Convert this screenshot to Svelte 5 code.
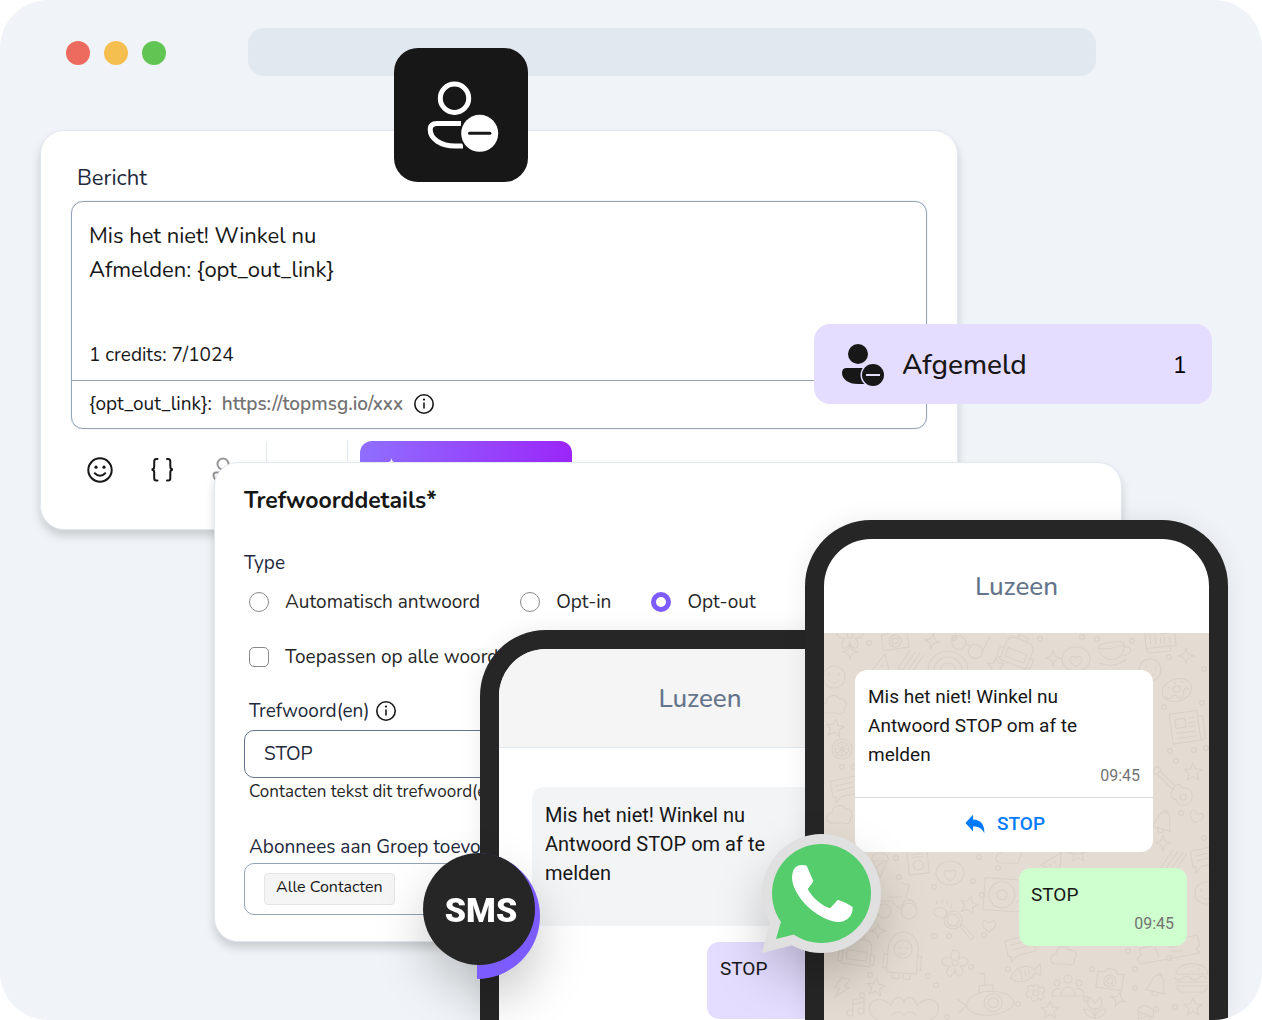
<script>
    let message = $state('Mis het niet! Winkel nu\nAfmelden: {opt_out_link}');
    let type = $state('opt-out');
    let applyAll = $state(false);
    let keyword = $state('STOP');

    const types = [
        { value: 'auto', label: 'Automatisch antwoord' },
        { value: 'opt-in', label: 'Opt-in' },
        { value: 'opt-out', label: 'Opt-out' }
    ];

    // line drawings for the chat wallpaper, each centred on 0,0
    const shapes = {
        star: 'M0-9 2.6-3 9-2.6 4 1.6 5.8 8 0 4.4-5.8 8-4 1.6-9-2.6-2.6-3Z',
        sparkle: 'M0-8C1-2 2-1 8 0 2 1 1 2 0 8-1 2-2 1-8 0-2-1-1-2 0-8Z',
        heart: 'M0 6C-12-2-5-9 0-3 5-9 12-2 0 6Z',
        cloud: 'M-9 8C-16 6-13-2-8-2-8-10 2-12 5-6 13-7 14 2 10 3 12 8 7 10 3 8Z',
        bell: 'M-10 7C-5 2-8-10 0-10S5 2 10 7ZM-3 8a3 3 0 0 0 6 0M-2-10a2 2 0 1 1 4 0',
        camera: 'M-13-7h6l3-4h8l3 4h6v16h-26ZM6 1a6 6 0 1 1-12 0 6 6 0 0 1 12 0M3 1a3 3 0 1 1-6 0 3 3 0 0 1 6 0',
        flower: 'M-3-4C-9-16 9-16 3-4 14-10 18 4 5 3 14 12 1 19 0 6-2 19-14 12-5 3-18 4-14-10-3-4ZM3 0a3 3 0 1 1-6 0 3 3 0 0 1 6 0',
        paper: 'M-16-15h28v30h-28ZM12-9h5v21q-2 3-5 3M-11-9h10v9h-10ZM3-9h5M3-4h5M3 0h5M-11 5H8M-11 10H8',
        donut: 'M15 0a15 11 0 1 1-30 0 15 11 0 0 1 30 0M4-1a4 3 0 1 1-8 0 4 3 0 0 1 8 0M-13 3q3 5 6 2t6 2 6-2 7-2M-8-5l2 1M6-7 8-5M9 1 11 0M0-8v2',
        cup: 'M-14-7C-14-11 12-11 12-7S-14-3-14-7C-14 12 12 12 12-7M12-3c8-2 8 8-2 8M-15 9q14 8 27 0',
        fries: 'M-12 10-4-10M-8 12 1-9M-3 12 6-9M2 12 10-8M-12 10 2 12',
        rainbow: 'M-20 10a20 20 0 0 1 40 0M-14 10a14 14 0 0 1 28 0M-8 10a8 8 0 0 1 16 0',
        glasses: 'M-4 2a7 7 0 1 1-14 0 7 7 0 0 1 14 0M14 7a7 7 0 1 1-14 0 7 7 0 0 1 14 0M-4 3q3-3 5 1M-18 0-14-12M14 5 18-10',
        bag: 'M-14 12v-18q0-8 9-8h10q9 0 9 8v18ZM-5-14v-4h10v4M-10-2h20v9h-20ZM-14 0h-4v10h4M14 0h4v10h-4',
        smile: 'M11 0a11 11 0 1 1-22 0 11 11 0 0 1 22 0M-5-4v2M5-4v2M-5 3q5 6 10 0',
        wheel: 'M10 0a10 10 0 1 1-20 0 10 10 0 0 1 20 0M7 0a7 7 0 1 1-14 0 7 7 0 0 1 14 0M-7 0h14M0-7v14M-5-5 5 5M5-5-5 5',
        guitar: 'M0-4C-4-8-10-6-9-1-18 0-17 14-8 15 0 16 3 10 2 5 7 4 6-1 3-3ZM1-5 16-20M4-2 19-17M15-21l4-4 5 5-4 4ZM-4 6a3 3 0 1 1-6 0 3 3 0 0 1 6 0',
        disc: 'M-21-16h42v32h-42ZM10 0a13 13 0 1 1-26 0 13 13 0 0 1 26 0M2 0a5 5 0 1 1-10 0 5 5 0 0 1 10 0M16-10v12l-4 5M16 10h1',
        radio: 'M-10-12h20v24h-20ZM5 3a5 5 0 1 1-10 0 5 5 0 0 1 10 0M-5-8h10M-5-5h10',
        heartring: 'M14 0a14 12 0 1 1-28 0 14 12 0 0 1 28 0M0 8C-10 1-5-6 0-1 5-6 10 1 0 8Z',
        scooter: 'M-9 8a7 7 0 1 1-14 0 7 7 0 0 1 14 0M17 8a8 8 0 1 1-16 0 8 8 0 0 1 16 0M-20-2h12L-2 5h4M2 5C2-8 18-4 16 6M6-5 9-18 2-20M-12-6h14',
        paw: 'M-7 5C-7-3 7-3 7 5 5 10-5 10-7 5ZM-7-3v-3M-2-6v-3M3-6v-3M8-3v-3',
        lens: 'M4-4a9 9 0 1 1-18 0 9 9 0 0 1 18 0M1-4a6 6 0 1 1-12 0 6 6 0 0 1 12 0M2 2 4 0 16 13 13 16Z',
        robot: 'M-15 22V-2a15 17 0 0 1 30 0v24ZM9-2a9 9 0 1 1-18 0 9 9 0 0 1 18 0M-4-3h2M3-3h2M-3 2q3 3 6 0M-15 4h-4v14h4M15 4h4v14h-4M-9 22v6h7v-6M2 22v6h7v-6',
        chat: 'M-14-8 12-11 15 6-4 8-11 14-10 8-13 8ZM-9-3 8-5M-8 2 9 0',
        fish: 'M-15 2C-9-8 5-9 10-1L17-6 15 6 10 2C3 10-9 10-15 2ZM-10 0h1M-5-4q3 5 0 10M0-2v5M4-2v4',
        sub: 'M24 3C22-12-20-16-24 3-20 19 20 17 24 3ZM12 2a9 9 0 1 1-18 0 9 9 0 0 1 18 0M8 2a5 5 0 1 1-10 0 5 5 0 0 1 10 0M-10-9v-7h14v7M-4-16v-12h-4M-24 3l-8-7M-24 3l-8 7',
        people: 'M4-6a4 4 0 1 1-8 0 4 4 0 0 1 8 0M-8-2a3 3 0 1 1-6 0 3 3 0 0 1 6 0M14-2a3 3 0 1 1-6 0 3 3 0 0 1 6 0M-7 11C-7-1 7-1 7 11ZM-8 11h-8C-16 4-11 3-8 4M8 11h8C16 4 11 3 8 4',
        gear: 'M-2-8h4l1 3 4-1 2 4-3 2 2 4-3 3-3-2-2 3h-4l-1-4-4 0-1-4 3-2-2-4 4-2 2 2ZM3 0a3 3 0 1 1-6 0 3 3 0 0 1 6 0',
        burger: 'M-16-3C-15-17 15-17 16-3ZM-17 1q4 4 8 0t8 0 8 0 8 0M-16 5h32M-15 9h30q0 6-5 6h-20q-5 0-5-6M-7-9h1M0-11h1M6-8h1M-1-6h1',
        bolt: 'M-3-10H6L2-2H7L-5 11-2 1H-7Z',
        note: 'M-4 6a3 3 0 1 1-6 0 3 3 0 0 1 6 0M7 4a3 3 0 1 1-6 0 3 3 0 0 1 6 0M-4 6V-7L7-9V4M-4-3 7-5',
        tulip: 'M0 12V2M0 2C-9 2-8-6-5-10L0-4 5-10C8-6 9 2 0 2ZM0 11C-8 11-11 5-11 2-5 2-1 6 0 11 1 6 5 2 11 2 11 5 8 11 0 11Z',
        pizza: 'M-10 8 5-11 10 9ZM1 1h2M-2 5h2M5 5h1',
        cone: 'M-8-3C-10-14 10-14 8-3ZM-7-3 0 14 7-3M-4 3 5-3',
        hands: 'M0 18C-18 14-38 8-34-6-28-16-16-10-13-5-10-18 0-14 0-8 0-14 10-18 13-5 16-10 28-16 34-6 38 8 18 14 0 18ZM-12 4q6-6 12 0 6-6 12 0',
        ticket: 'M-30 2 28-12 31-2 27 2 31 6-28 17-32 12-28 8ZM-14 1l4 8M0 0h8M2 4h12'
    };

    // [shape, x, y, turn]
    const doodles = [
        ['flower', 26, 2, 0], ['camera', 71, 7, -8], ['sparkle', 108, 8, 10], ['glasses', 146, 10, 12], ['bag', 193, 20, 22],
        ['sparkle', 229, 25, 0], ['heartring', 252, 26, 0], ['cup', 289, 19, -8], ['paper', 336, 2, 84], ['sparkle', 362, 23, 0],
        ['smile', 326, 37, 14], ['donut', 353, 57, -18], ['paper', 363, 94, -8], ['pizza', 56, 32, 0], ['fries', 88, 28, 12],
        ['rainbow', 124, 28, 0], ['sparkle', 26, 19, 0], ['smile', 10, 44, 0], ['cloud', 10, 72, 0], ['star', 11, 95, 8],
        ['wheel', 18, 116, 0], ['star', 369, 139, 0], ['chat', 21, 155, -6], ['cloud', 16, 182, 0], ['guitar', 353, 157, -90],
        ['bell', 339, 189, 16], ['sparkle', 339, 210, 0], ['fries', 351, 227, 12], ['chat', 381, 225, -6], ['smile', 382, 260, 0],
        ['star', 172, 33, 0], ['heart', 372, 184, 20], ['cone', 56, 231, 0], ['radio', 94, 229, -6], ['heartring', 126, 240, 0],
        ['pizza', 229, 228, 20], ['star', 254, 220, 0], ['disc', 181, 262, 4], ['scooter', 76, 270, 0], ['star', 145, 272, 14],
        ['paw', 118, 276, 18], ['lens', 134, 291, 0], ['heart', 165, 293, 0], ['bag', 33, 320, 8], ['robot', 79, 318, 4],
        ['flower', 131, 330, 0], ['chat', 196, 314, -8], ['cloud', 240, 323, 0], ['fish', 201, 340, -12], ['sub', 166, 368, -4],
        ['people', 244, 352, 0], ['gear', 212, 360, 0], ['camera', 286, 347, 8], ['bell', 333, 352, 14], ['burger', 368, 344, 0],
        ['ticket', 345, 314, 0], ['bolt', 18, 355, 14], ['star', 52, 354, 8], ['note', 33, 374, 0], ['hands', 80, 378, 0],
        ['sparkle', 294, 366, 20], ['tulip', 271, 374, 0], ['star', 226, 377, 0], ['star', 369, 374, 0], ['sparkle', 54, 298, 0],
        ['cup', 252, 208, 10], ['cone', 320, 384, 20], ['cloud', 185, 222, 0]
    ];

    const dots = [
        [45, 10], [130, 5], [216, 6], [258, 4], [273, 6], [308, 8], [40, 40], [345, 24], [380, 36], [378, 70],
        [340, 74], [370, 117], [346, 118], [352, 128], [382, 115], [30, 134], [18, 134], [357, 180], [380, 205],
        [72, 225], [155, 224], [174, 235], [149, 248], [110, 254], [75, 244], [158, 262], [110, 303], [160, 302],
        [125, 303], [46, 342], [112, 352], [147, 334], [184, 336], [194, 371], [123, 384], [268, 336], [311, 336],
        [345, 325], [311, 355], [351, 374], [332, 376], [262, 366], [198, 290], [38, 362], [104, 343], [304, 318]
    ];
</script>

{#snippet infoIcon()}
    <svg class="info" viewBox="0 0 22 22" aria-hidden="true">
        <circle cx="11" cy="11" r="9.2" />
        <path d="M11 9.6v6" />
        <circle class="point" cx="11" cy="6.6" r="1.1" />
    </svg>
{/snippet}

{#snippet wallpaper()}
    <svg class="wallpaper" aria-hidden="true">
        {#each doodles as [name, x, y, turn]}
            <path d={shapes[name]} transform="translate({x} {y}) rotate({turn})" />
        {/each}
        {#each dots as [x, y]}
            <circle cx={x} cy={y} r="2.4" />
        {/each}
    </svg>
{/snippet}

<main class="scene">
    <header class="browser">
        <div class="lights">
            <span class="light red"></span>
            <span class="light yellow"></span>
            <span class="light green"></span>
        </div>
        <div class="address"></div>
    </header>

    <section class="card composer">
        <label class="composer-label" for="message">Bericht</label>
        <div class="editor">
            <textarea id="message" rows="3" spellcheck="false" bind:value={message}></textarea>
            <p class="credits">1 credits: 7/1024</p>
            <div class="link-row">
                <span>{'{opt_out_link}'}:</span>
                <a href="#link">https://topmsg.io/xxx</a>
                {@render infoIcon()}
            </div>
        </div>
        <div class="toolbar">
            <button class="tool" aria-label="Emoji">
                <svg viewBox="0 0 26 26">
                    <circle cx="13" cy="13" r="11.7" />
                    <path d="M7.8 16.2q5.2 5 10.4 0" />
                    <circle class="point" cx="9" cy="10.2" r="1.6" />
                    <circle class="point" cx="17" cy="10.2" r="1.6" />
                </svg>
            </button>
            <button class="tool" aria-label="Variabele">
                <svg viewBox="0 0 26 26">
                    <path d="M7.5 2H6.2Q4.2 2 4.2 4.5V9.5Q4.2 12.5 1.5 12.5 4.2 12.5 4.2 15.5V21Q4.2 23.5 6.2 23.5H7.5" />
                    <path d="M17 2H18.3Q20.3 2 20.3 4.5V9.5Q20.3 12.5 23 12.5 20.3 12.5 20.3 15.5V21Q20.3 23.5 18.3 23.5H17" />
                </svg>
            </button>
            <button class="tool faded" aria-label="Afmeldlink">
                <svg viewBox="0 0 26 26">
                    <circle cx="10" cy="7" r="5.5" />
                    <path d="M14 15.5H3Q.5 15.5 .5 18.5 1.5 24.5 10 24.5" />
                </svg>
            </button>
            <span class="divider first"></span>
            <span class="divider"></span>
            <button class="ai" aria-label="AI">
                <svg viewBox="0 0 30 24">
                    <path d="M11.5 1C12 4 12.5 4.500 15.500 5.500 12.500 6.500 12 7 11.500 10 11 7 10.500 6.500 7.500 5.500 10.500 4.500 11 4 11.500 1ZM27 4.500l1 3 3 1-3 1-1 3-1-3-3-1 3-1Z" />
                </svg>
            </button>
        </div>
    </section>

    <div class="tile">
        <svg viewBox="0 0 76 76" aria-hidden="true">
            <circle cx="31.5" cy="21.3" r="14.2" />
            <path d="M38 46.5H14Q7.2 46.5 7.2 52.5C7.2 62 18 69 32 69H40" />
            <circle class="cut" cx="56.7" cy="56.3" r="20.5" />
            <circle class="fill" cx="56.7" cy="56.3" r="18.5" />
            <path class="minus" d="M46.5 56.3h20.4" />
        </svg>
    </div>

    <aside class="status">
        <svg viewBox="0 0 44 44" aria-hidden="true">
            <circle cx="17" cy="11" r="10" />
            <path d="M5.5 25H28V41H17C7 41 1 36 1 30Q1 25 5.5 25Z" />
            <circle class="cut" cx="32" cy="32" r="12.5" />
            <circle cx="32" cy="32" r="11" />
            <path class="minus" d="M25 32h14" />
        </svg>
        <span class="status-name">Afgemeld</span>
        <span class="status-count">1</span>
    </aside>

    <section class="card details">
        <h2>Trefwoorddetails*</h2>
        <fieldset>
            <legend>Type</legend>
            <div class="radios">
                {#each types as item}
                    <label class="choice">
                        <input type="radio" name="type" value={item.value} bind:group={type} />
                        {item.label}
                    </label>
                {/each}
            </div>
        </fieldset>
        <label class="choice apply">
            <input type="checkbox" bind:checked={applyAll} />
            Toepassen op alle woorden
        </label>
        <div class="field-label">
            <label for="keyword">Trefwoord(en)</label>
            {@render infoIcon()}
        </div>
        <input id="keyword" class="keyword" type="text" bind:value={keyword} />
        <p class="hint">Contacten tekst dit trefwoord(en)</p>
        <label class="group-label" for="group">Abonnees aan Groep toevoegen</label>
        <div class="group">
            <button class="chip">Alle Contacten</button>
            <input id="group" type="text" />
        </div>
    </section>

    <section class="phone sms-phone">
        <header>Luzeen</header>
        <div class="chat">
            <p class="bubble received">Mis het niet! Winkel nu<br />Antwoord STOP om af te<br />melden</p>
            <p class="bubble sent">STOP</p>
        </div>
    </section>

    <section class="phone wa-phone">
        <header>Luzeen</header>
        <div class="chat">
            {@render wallpaper()}
            <div class="bubble received">
                <p>Mis het niet! Winkel nu<br />Antwoord STOP om af te<br />melden</p>
                <time>09:45</time>
                <button class="reply">
                    <svg viewBox="0 0 20 20" aria-hidden="true">
                        <path d="M8 .8V5.5C15.5 5.6 19.8 10.5 19.3 19.2 17 14.5 13.5 12.6 8 12.6V17.2L.4 9Z" />
                    </svg>
                    STOP
                </button>
            </div>
            <div class="bubble sent">
                <p>STOP</p>
                <time>09:45</time>
            </div>
        </div>
    </section>

    <div class="sms-badge"><span>SMS</span></div>

    <svg class="wa-badge" viewBox="0 0 120 120" role="img" aria-label="WhatsApp">
        <g class="rim">
            <circle cx="59.5" cy="60.5" r="59.5" />
            <path d="M8 88 0 120 31 112 40 80Z" />
        </g>
        <g class="leaf">
            <circle cx="59.5" cy="60.5" r="49.5" />
            <path d="M19 88.5 14 106 32 101.5 45 80Z" />
        </g>
        <path class="handset" d="M36.3 32.5Q41 31.5 44.7 32.8L51.3 48Q50 51 45.7 56C50 64 59 72.5 68 75.3Q72.5 71 75.7 66.8Q83 69 90.7 74Q91 84 82 88Q77 90 70 88C50 82 31 62 30 45Q30 35 36.3 32.5Z" />
    </svg>
</main>

<style>
    :global(body) {
        margin: 0;
        background: #fff;
    }

    .scene {
        position: relative;
        min-height: 100vh;
        overflow: hidden;
        border-radius: 48px;
        background: #f0f4f8;
        color: #171717;
        font-family: Nunito, Lato, sans-serif;
        font-size: 19px;
        line-height: 24px;
    }

    .scene * {
        box-sizing: border-box;
    }

    p,
    h2,
    fieldset {
        margin: 0;
        padding: 0;
        border: 0;
    }

    button,
    input,
    textarea {
        margin: 0;
        padding: 0;
        border: 0;
        background: none;
        color: inherit;
        font: inherit;
        outline: none;
    }

    /* browser bar */
    .browser {
        display: flex;
        align-items: center;
        padding: 28px 166px 0 66px;
    }

    .lights {
        display: flex;
        gap: 14px;
        width: 182px;
        padding-top: 2px;
    }

    .light {
        width: 24px;
        height: 24px;
        border-radius: 50%;
    }

    .red {
        background: #ed6a5e;
    }

    .yellow {
        background: #f4bf4f;
    }

    .green {
        background: #61c554;
    }

    .address {
        flex: 1;
        height: 48px;
        border-radius: 16px;
        background: #e2e8f0;
    }

    /* windows lying on the canvas */
    .card {
        position: absolute;
        border: 1px solid #e2e8f0;
        border-radius: 24px;
        background: #fff;
        box-shadow: 0 6px 10px rgba(0, 0, 0, 0.16);
    }

    .composer {
        top: 130px;
        left: 40px;
        right: 304px;
        height: 400px;
        padding: 35px 30px 0;
    }

    .composer-label {
        display: block;
        padding-left: 6px;
        color: #1e293b;
        font-size: 22px;
    }

    .editor {
        margin-top: 11px;
        border: 1px solid #94a3b8;
        border-radius: 12px;
        box-shadow: 0 0 1px #94a3b8;
    }

    textarea {
        display: block;
        width: 100%;
        height: 120px;
        padding: 17px 17px 0;
        font-size: 22px;
        line-height: 34px;
        resize: none;
    }

    .credits {
        padding: 21px 17px 13px;
    }

    .link-row {
        display: flex;
        align-items: center;
        gap: 10px;
        padding: 11px 17px 12px;
        border-top: 1px solid #94a3b8;
    }

    .link-row a {
        color: #737373;
        font-weight: 600;
        text-decoration: none;
    }

    .info {
        width: 22px;
        height: 22px;
        fill: none;
        stroke: #171717;
        stroke-width: 1.6;
    }

    .point {
        fill: #171717;
        stroke: none;
    }

    .toolbar {
        display: flex;
        align-items: flex-start;
        margin-top: 12px;
        padding-left: 16px;
    }

    .tool {
        display: flex;
        width: 26px;
        margin: 16px 37px 0 0;
    }

    .tool svg {
        width: 26px;
        height: 26px;
        fill: none;
        stroke: #171717;
        stroke-width: 2;
        stroke-linecap: round;
        overflow: visible;
    }

    .tool .point {
        fill: #171717;
        stroke: none;
    }

    .faded {
        opacity: 0.45;
    }

    .divider {
        width: 1px;
        height: 56px;
        margin-right: 12px;
        background: #e2e8f0;
    }

    .first {
        margin: 0 80px 0 -10px;
    }

    .ai {
        width: 212px;
        height: 56px;
        border-radius: 12px;
        background: linear-gradient(90deg, #8f6fff, #9b26f9);
    }

    .ai svg {
        display: block;
        width: 30px;
        height: 24px;
        margin-left: 20px;
        overflow: visible;
        fill: #fff;
    }

    .tile {
        position: absolute;
        top: 48px;
        left: 394px;
        display: grid;
        place-items: center;
        width: 134px;
        height: 134px;
        border-radius: 24px;
        background: #171717;
    }

    .tile svg {
        width: 76px;
        height: 76px;
        fill: none;
        stroke: #fff;
        stroke-width: 5;
    }

    .tile .cut {
        fill: #171717;
        stroke: none;
    }

    .tile .fill {
        fill: #fff;
        stroke: none;
    }

    .tile .minus {
        stroke: #171717;
        stroke-width: 3;
        stroke-linecap: round;
    }

    .status {
        position: absolute;
        top: 324px;
        right: 50px;
        display: flex;
        align-items: center;
        gap: 17px;
        width: 398px;
        height: 80px;
        padding: 2px 25px 0 27px;
        border-radius: 16px;
        background: #e5ddff;
    }

    .status svg {
        width: 44px;
        height: 44px;
        fill: #171717;
    }

    .status .cut {
        fill: #e5ddff;
    }

    .status .minus {
        stroke: #e5ddff;
        stroke-width: 2;
    }

    .status-name {
        flex: 1;
        font-size: 28px;
        font-weight: 500;
    }

    .status-count {
        color: #000;
        font-size: 24px;
    }

    .details {
        top: 462px;
        left: 214px;
        right: 140px;
        height: 480px;
        padding: 26px 29px 0;
    }

    h2 {
        font-size: 23px;
        font-weight: 700;
    }

    legend {
        padding: 0;
        color: #1e293b;
    }

    fieldset {
        margin-top: 38px;
    }

    .radios {
        display: flex;
        gap: 35px;
        padding-top: 15px;
    }

    .choice {
        display: flex;
        align-items: center;
        gap: 16px;
        padding-left: 5px;
        color: #262626;
        white-space: nowrap;
    }

    .choice input {
        width: 20px;
        height: 20px;
        border: 1px solid #8a8a8a;
        border-radius: 50%;
        background: #fff;
        appearance: none;
    }

    .choice input[type='radio']:checked {
        border: 5px solid #7c5cff;
    }

    .choice input[type='checkbox'] {
        border-radius: 5px;
    }

    .apply {
        margin-top: 31px;
    }

    .field-label {
        display: flex;
        align-items: center;
        gap: 6px;
        margin-top: 30px;
        padding-left: 5px;
        color: #1e293b;
    }

    .keyword {
        display: block;
        width: 100%;
        height: 48px;
        margin-top: 7px;
        padding: 0 19px;
        border: 1px solid #64748b;
        border-radius: 10px;
        color: #1e293b;
    }

    .hint {
        padding: 2px 5px 0;
        color: #262626;
        font-size: 17px;
    }

    .group-label {
        display: block;
        margin-top: 31px;
        padding-left: 5px;
        color: #1e293b;
    }

    .group {
        display: flex;
        align-items: center;
        gap: 8px;
        height: 52px;
        margin-top: 4px;
        padding: 0 19px;
        border: 1px solid #94a3b8;
        border-radius: 10px;
    }

    .group input {
        flex: 1;
    }

    .chip {
        height: 32px;
        padding: 0 11px 4px;
        border: 1px solid #e5e5e5;
        border-radius: 4px;
        background: #f5f5f5;
        font-size: 16px;
    }

    /* phones */
    .phone {
        position: absolute;
        bottom: 0;
        display: flex;
        flex-direction: column;
        overflow: hidden;
        border: 19px solid #262626;
        border-bottom: 0;
        border-radius: 66px 66px 0 0;
        background: #fff;
        box-shadow: 0 0 24px rgba(0, 0, 0, 0.08);
        font-family: Roboto, sans-serif;
        font-size: 19px;
        line-height: 29px;
    }

    .phone header {
        display: flex;
        align-items: center;
        justify-content: center;
        color: #64748b;
        font-family: Nunito, Lato, sans-serif;
        font-size: 26px;
        font-weight: 500;
    }

    .chat {
        position: relative;
        flex: 1;
        display: flex;
        flex-direction: column;
        align-items: flex-start;
    }

    .bubble {
        position: relative;
        border-radius: 12px;
    }

    .sms-phone {
        top: 630px;
        left: 480px;
        width: 440px;
    }

    .sms-phone header {
        height: 99px;
        border-bottom: 1px solid #e2e8f0;
        background: #f5f5f5;
    }

    .sms-phone .chat {
        gap: 16px;
        padding: 39px 33px 0;
    }

    .sms-phone .received {
        height: 139px;
        width: 300px;
        padding: 14px 13px;
        background: #f3f4f6;
        font-size: 20px;
    }

    .sms-phone .sent {
        align-self: flex-end;
        width: 161px;
        height: 77px;
        padding: 12px 13px;
        background: #e5ddff;
    }

    .wa-phone {
        top: 520px;
        left: 805px;
        width: 423px;
    }

    .wa-phone header {
        height: 94px;
    }

    .wa-phone .chat {
        gap: 16px;
        padding: 37px 22px 0 31px;
        background: #e4dcd2;
    }

    .wallpaper {
        position: absolute;
        inset: 0;
        width: 100%;
        height: 100%;
        fill: none;
        stroke: #d9d1c7;
        stroke-width: 1.1;
        stroke-linejoin: round;
        stroke-linecap: round;
    }

    .wa-phone .received {
        display: flex;
        flex-direction: column;
        width: 298px;
        background: #fff;
    }

    .wa-phone .received p {
        padding: 12px 13px 0;
    }

    time {
        align-self: flex-end;
        padding: 0 13px;
        color: #737373;
        font-size: 16px;
        line-height: 14px;
    }

    .wa-phone .received time {
        padding-bottom: 14px;
    }

    .reply {
        display: flex;
        align-items: center;
        justify-content: center;
        gap: 12px;
        height: 55px;
        padding: 0 0 3px 2px;
        border-top: 1px solid #dcdcdc;
        color: #007bff;
        font-weight: 500;
    }

    .reply svg {
        width: 20px;
        height: 20px;
        fill: #007bff;
    }

    .wa-phone .sent {
        display: flex;
        flex-direction: column;
        align-self: flex-end;
        width: 168px;
        height: 78px;
        padding-top: 12px;
        background: #cfffce;
    }

    .wa-phone .sent p {
        padding: 0 12px 8px;
    }

    /* channel badges */
    .sms-badge {
        position: absolute;
        top: 853px;
        left: 423px;
        display: grid;
        place-items: center;
        width: 112px;
        height: 112px;
        color: #fff;
        font-family: Roboto, sans-serif;
        font-size: 34px;
        font-weight: 900;
        filter: drop-shadow(0 24px 24px rgba(0, 0, 0, 0.2));
    }

    .sms-badge::before {
        content: '';
        position: absolute;
        top: 0;
        left: 54px;
        width: 63px;
        height: 126px;
        border-radius: 0 63px 63px 0;
        background: #7c5cff;
    }

    .sms-badge::after {
        content: '';
        position: absolute;
        inset: 0;
        border-radius: 50%;
        background: #262626;
    }

    .sms-badge span {
        position: relative;
        z-index: 1;
        padding: 2px 0 0 4px;
    }

    .wa-badge {
        position: absolute;
        top: 833px;
        left: 762px;
        width: 120px;
        height: 120px;
        overflow: visible;
        filter: drop-shadow(0 24px 24px rgba(0, 0, 0, 0.2));
    }

    .rim {
        fill: #e0e0e0;
    }

    .leaf {
        fill: #55cd6c;
    }

    .handset {
        fill: #fff;
    }
</style>
